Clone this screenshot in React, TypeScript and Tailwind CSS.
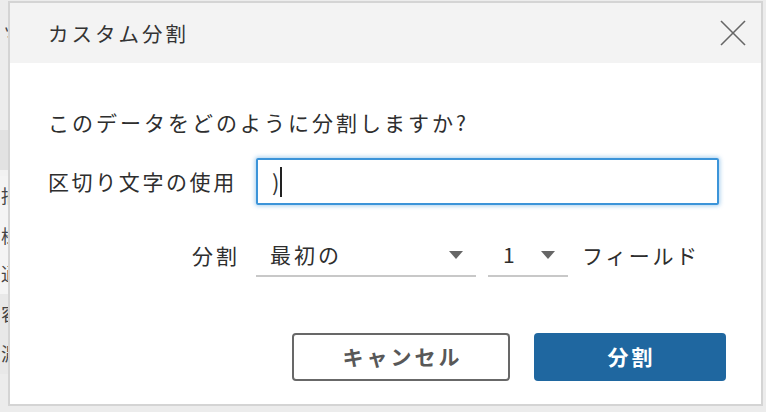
import React from "react";

const font = { fontFamily: '"Noto Sans CJK JP", "Noto Sans", sans-serif' };

function Caret() {
  return (
    <svg width="14" height="8" viewBox="0 0 14 8" className="shrink-0">
      <polygon points="0,0 14,0 7,8" fill="#666666" />
    </svg>
  );
}

export default function App() {
  return (
    <div
      className="relative w-[766px] h-[412px] overflow-hidden bg-[#ececec] text-[#2e2e2e]"
      style={font}
    >
      {/* background page peeking around the dialog */}
      <div className="flex flex-col w-[40px] text-[18px] leading-none text-[#444]">
        <div className="h-[20px]" />
        <div className="h-[26px] pl-[2px]">ッ</div>
        <div className="h-[84px]" />
        <div className="h-[40px] bg-[#e2e2e2]" />
        <div className="h-[6px] bg-[#f2f2f2]" />
        <div className="h-[38px] bg-[#f4f4f4] pt-[10px] pl-[1px]">抽</div>
        <div className="h-[40px] bg-[#f4f4f4] pt-[12px] pl-[1px]">様</div>
        <div className="h-[40px] bg-[#f4f4f4] pt-[10px] pl-[1px]">通</div>
        <div className="h-[40px] bg-[#e8e8e8] pt-[10px] pl-[1px]">容</div>
        <div className="h-[40px] bg-[#e8e8e8] pt-[10px] pl-[1px]">濃</div>
      </div>

      {/* dialog */}
      <div className="absolute left-[8px] top-[1px] w-[755px] h-[405px] border-2 border-[#d4d4d4] bg-white flex flex-col">
        <div className="h-[60px] bg-[#f3f3f3] flex items-center justify-between pl-[38px] pr-[15px]">
          <span className="text-[20.5px] tracking-[3px] text-[#333]">カスタム分割</span>
          <svg width="26" height="26" viewBox="0 0 26 26">
            <line x1="1" y1="1" x2="25" y2="25" stroke="#666" strokeWidth="1.6" />
            <line x1="25" y1="1" x2="1" y2="25" stroke="#666" strokeWidth="1.6" />
          </svg>
        </div>

        <div className="flex flex-col pl-[38px]">
          <div className="mt-[46px] h-[28px] flex items-center text-[21px] tracking-[3px]">
            このデータをどのように分割しますか?
          </div>

          <div className="mt-[21px] flex items-center">
            <div className="w-[208px] text-[21px] tracking-[2.6px] whitespace-nowrap">区切り文字の使用</div>
            <div className="w-[463px] h-[47px] border-2 border-[#3b94d9] rounded-[2px] shadow-[0_0_4px_1px_rgba(59,148,217,0.45)] flex items-center pl-[14px]">
              <span className="text-[22px] text-[#333]">)</span>
              <span className="ml-[1px] w-[2px] h-[30px] bg-[#222]" />
            </div>
          </div>

          <div className="mt-[30px] flex items-center">
            <div className="w-[208px] flex justify-end pr-[16px] text-[21px] tracking-[3px]">分割</div>
            <div className="w-[220px] h-[42px] border-b-2 border-[#c8c8c8] flex items-center justify-between pl-[14px] pr-[13px]">
              <span className="text-[21px] tracking-[3px]">最初の</span>
              <Caret />
            </div>
            <div className="ml-[12px] w-[80px] h-[42px] border-b-2 border-[#c8c8c8] flex items-center justify-between pl-[15px] pr-[13px]">
              <span className="text-[21px]">1</span>
              <Caret />
            </div>
            <span className="ml-[14px] text-[21px] tracking-[2.6px]">フィールド</span>
          </div>

          <div className="mt-[56px] flex items-center">
            <div className="ml-[244px] w-[218px] h-[48px] border-2 border-[#686868] rounded-[4px] flex items-center justify-center pl-[3px] text-[21px] font-bold tracking-[3px] text-[#585858]">
              キャンセル
            </div>
            <div className="ml-[24px] w-[192px] h-[48px] bg-[#1f67a0] rounded-[4px] flex items-center justify-center pl-[3px] text-[21px] font-bold tracking-[3px] text-white">
              分割
            </div>
          </div>
        </div>
      </div>
    </div>
  );
}
